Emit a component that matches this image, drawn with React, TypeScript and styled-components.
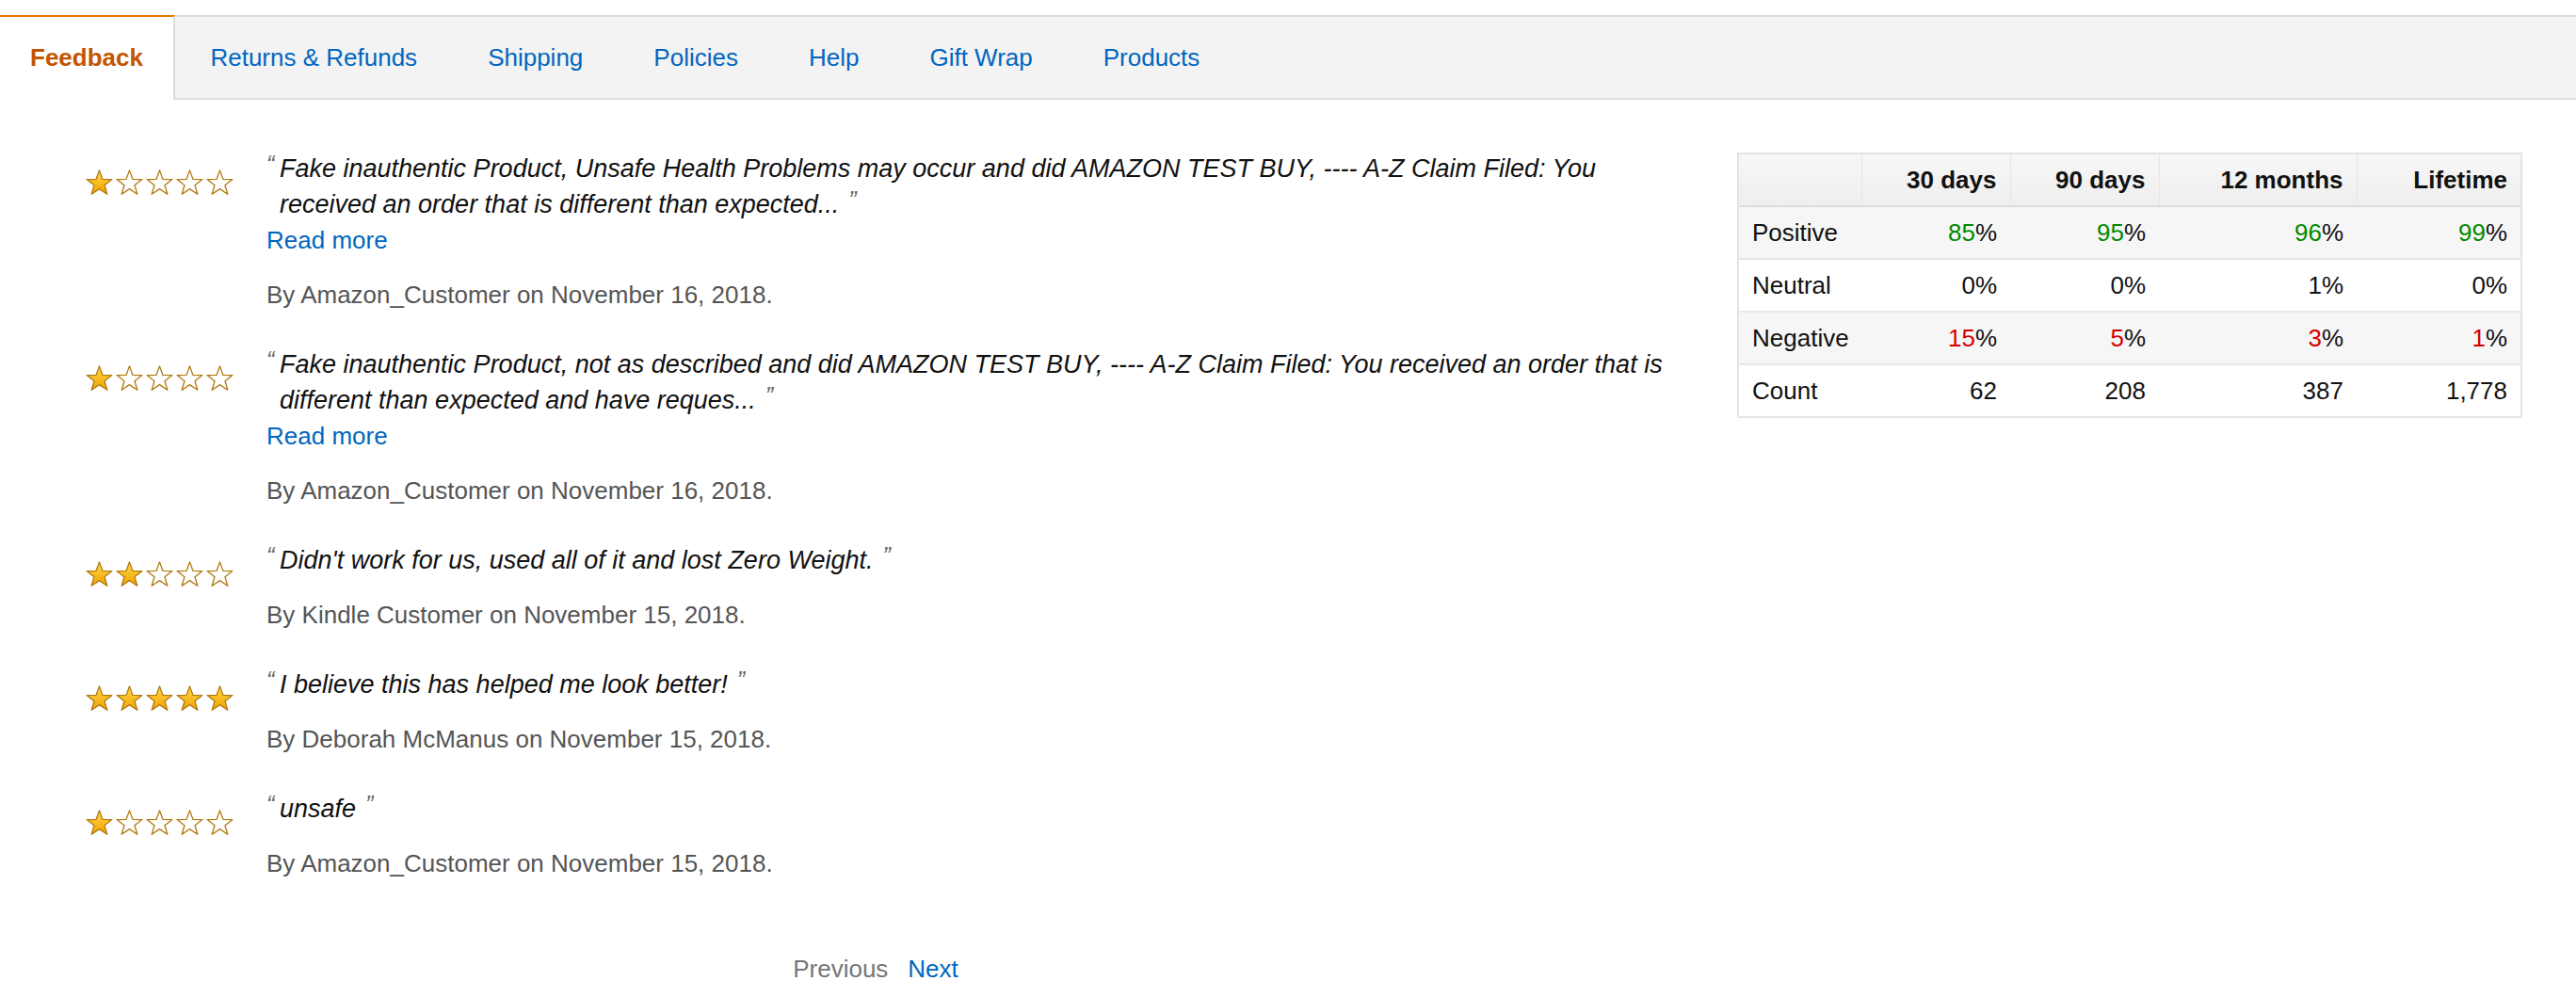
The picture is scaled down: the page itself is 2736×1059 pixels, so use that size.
import React from 'react';
import styled, { createGlobalStyle } from 'styled-components';

const GlobalStyle = createGlobalStyle`
  html, body {
    margin: 0;
    padding: 0;
    background: #fff;
  }
  body {
    font-family: "Liberation Sans", Arial, sans-serif;
    font-size: 26px;
    line-height: 38px;
    color: #111;
  }
`;

const Page = styled.div`
  padding-top: 16px;
  width: 2736px;
`;

/* tab strip */
const TabBar = styled.ul`
  display: flex;
  margin: 0;
  padding: 0;
  list-style: none;
  background: #f3f3f3;
  border-top: 2px solid #ddd;
  border-bottom: 2px solid #ddd;
`;

const Tab = styled.li<{ $active?: boolean }>`
  height: ${(p) => (p.$active ? '88px' : '86px')};
  line-height: 86px;
  padding: 0 ${(p) => (p.$active ? '32px' : '37.5px')};
  font-weight: ${(p) => (p.$active ? 700 : 400)};
  color: ${(p) => (p.$active ? '#c45500' : '#0066c0')};
  background: ${(p) => (p.$active ? '#fff' : 'transparent')};
  border-top: ${(p) => (p.$active ? '2px solid #e77600' : 'none')};
  border-right: ${(p) => (p.$active ? '2px solid #ddd' : 'none')};
  margin: ${(p) => (p.$active ? '-2px 0 -2px 0' : '0')};
  cursor: pointer;
  white-space: nowrap;
`;

/* body */
const Content = styled.div`
  display: flex;
  gap: 47px;
  padding: 54px 57px 0 62px;
`;

const ReviewList = styled.div`
  flex: 1;
  display: flex;
  flex-direction: column;
`;

const Review = styled.div`
  display: grid;
  grid-template-columns: 221px 1fr;
  margin-bottom: 36px;
`;

const Stars = styled.div`
  display: flex;
  gap: 3px;
  padding: 20px 0 0 29px;
  height: 27px;
`;

const QuoteText = styled.div`
  font-style: italic;
  font-size: 27px;
  line-height: 38px;
  padding-left: 14px;
  text-indent: -14px;
  color: #111;
`;

const QuoteMark = styled.span<{ $close?: boolean }>`
  display: inline-block;
  width: ${(p) => (p.$close ? 'auto' : '14px')};
  margin-left: ${(p) => (p.$close ? '10px' : '0')};
  text-indent: 0;
  font-size: 25px;
  line-height: 1;
  color: #666;
  vertical-align: 5px;
`;

const ReadMore = styled.a`
  display: block;
  color: #0066c0;
  text-decoration: none;
  cursor: pointer;
`;

const Byline = styled.div`
  margin-top: 20px;
  color: #555;
`;

const Pagination = styled.div`
  display: flex;
  justify-content: center;
  gap: 21px;
  margin-top: 38px;
`;

const PageLink = styled.span<{ $disabled?: boolean }>`
  color: ${(p) => (p.$disabled ? '#767676' : '#0066c0')};
  cursor: ${(p) => (p.$disabled ? 'default' : 'pointer')};
`;

/* summary table */
const Table = styled.table`
  width: 832px;
  flex: none;
  align-self: flex-start;
  margin-top: 2px;
  border-collapse: collapse;
  table-layout: fixed;
  border: 2px solid #e3e3e3;
`;

const Th = styled.th`
  padding: 8px 14px;
  line-height: 38px;
  text-align: right;
  font-weight: 700;
  color: #111;
  background: linear-gradient(#f7f7f7, #eeeeee);
  border-bottom: 2px solid #dddddd;
  border-left: 1px solid #e6e6e6;
  &:first-child {
    border-left: none;
  }
`;

const Tr = styled.tr<{ $shade?: boolean }>`
  background: ${(p) => (p.$shade ? '#f6f6f6' : '#fff')};
  border-bottom: 2px solid #e7e7e7;
`;

const Td = styled.td<{ $label?: boolean }>`
  padding: 8px 14px;
  line-height: 38px;
  text-align: ${(p) => (p.$label ? 'left' : 'right')};
  color: #111;
`;

const Tone = styled.span<{ $tone: 'good' | 'bad' }>`
  color: ${(p) => (p.$tone === 'good' ? '#008a00' : '#d60000')};
`;

const Star = ({ filled }: { filled: boolean }) => (
  <svg width="29" height="27" viewBox="0 0 29 27">
    <defs>
      <linearGradient id="starFill" x1="0" y1="0" x2="0" y2="1">
        <stop offset="0" stopColor="#ffd84a" />
        <stop offset="1" stopColor="#f3a200" />
      </linearGradient>
    </defs>
    <polygon
      points="14.5,0.9 17.9,10.3 27.9,10.6 20,16.7 22.8,26.3 14.5,20.6 6.2,26.3 9,16.7 1.1,10.6 11.1,10.3"
      fill={filled ? 'url(#starFill)' : '#fff'}
      stroke="#b07a10"
      strokeWidth="1.3"
      strokeLinejoin="round"
    />
  </svg>
);

const tabs = ['Feedback', 'Returns & Refunds', 'Shipping', 'Policies', 'Help', 'Gift Wrap', 'Products'];

const reviews = [
  {
    rating: 1,
    text: 'Fake inauthentic Product, Unsafe Health Problems may occur and did AMAZON TEST BUY, ---- A-Z Claim Filed: You received an order that is different than expected...',
    more: true,
    by: 'By Amazon_Customer on November 16, 2018.',
  },
  {
    rating: 1,
    text: 'Fake inauthentic Product, not as described and did AMAZON TEST BUY, ---- A-Z Claim Filed: You received an order that is different than expected and have reques...',
    more: true,
    by: 'By Amazon_Customer on November 16, 2018.',
  },
  {
    rating: 2,
    text: "Didn't work for us, used all of it and lost Zero Weight.",
    more: false,
    by: 'By Kindle Customer on November 15, 2018.',
  },
  {
    rating: 5,
    text: 'I believe this has helped me look better!',
    more: false,
    by: 'By Deborah McManus on November 15, 2018.',
  },
  {
    rating: 1,
    text: 'unsafe',
    more: false,
    by: 'By Amazon_Customer on November 15, 2018.',
  },
];

type Cell = string | { n: string; tone: 'good' | 'bad' };

const rows: { label: string; cells: Cell[] }[] = [
  {
    label: 'Positive',
    cells: [
      { n: '85', tone: 'good' },
      { n: '95', tone: 'good' },
      { n: '96', tone: 'good' },
      { n: '99', tone: 'good' },
    ],
  },
  { label: 'Neutral', cells: ['0%', '0%', '1%', '0%'] },
  {
    label: 'Negative',
    cells: [
      { n: '15', tone: 'bad' },
      { n: '5', tone: 'bad' },
      { n: '3', tone: 'bad' },
      { n: '1', tone: 'bad' },
    ],
  },
  { label: 'Count', cells: ['62', '208', '387', '1,778'] },
];

export default function App() {
  return (
    <Page>
      <GlobalStyle />
      <TabBar>
        {tabs.map((t, i) => (
          <Tab key={t} $active={i === 0}>
            {t}
          </Tab>
        ))}
      </TabBar>

      <Content>
        <ReviewList>
          {reviews.map((r, i) => (
            <Review key={i}>
              <Stars>
                {[0, 1, 2, 3, 4].map((s) => (
                  <Star key={s} filled={s < r.rating} />
                ))}
              </Stars>
              <div>
                <QuoteText>
                  <QuoteMark>“</QuoteMark>
                  {r.text}
                  <QuoteMark $close>”</QuoteMark>
                </QuoteText>
                {r.more && <ReadMore>Read more</ReadMore>}
                <Byline>{r.by}</Byline>
              </div>
            </Review>
          ))}
          <Pagination>
            <PageLink $disabled>Previous</PageLink>
            <PageLink>Next</PageLink>
          </Pagination>
        </ReviewList>

        <Table>
          <colgroup>
            <col style={{ width: 131 }} />
            <col style={{ width: 158 }} />
            <col style={{ width: 158 }} />
            <col style={{ width: 210 }} />
            <col style={{ width: 175 }} />
          </colgroup>
          <thead>
            <tr>
              <Th />
              <Th>30 days</Th>
              <Th>90 days</Th>
              <Th>12 months</Th>
              <Th>Lifetime</Th>
            </tr>
          </thead>
          <tbody>
            {rows.map((row, i) => (
              <Tr key={row.label} $shade={i % 2 === 0}>
                <Td $label>{row.label}</Td>
                {row.cells.map((c, j) => (
                  <Td key={j}>
                    {typeof c === 'string' ? (
                      c
                    ) : (
                      <>
                        <Tone $tone={c.tone}>{c.n}</Tone>%
                      </>
                    )}
                  </Td>
                ))}
              </Tr>
            ))}
          </tbody>
        </Table>
      </Content>
    </Page>
  );
}
